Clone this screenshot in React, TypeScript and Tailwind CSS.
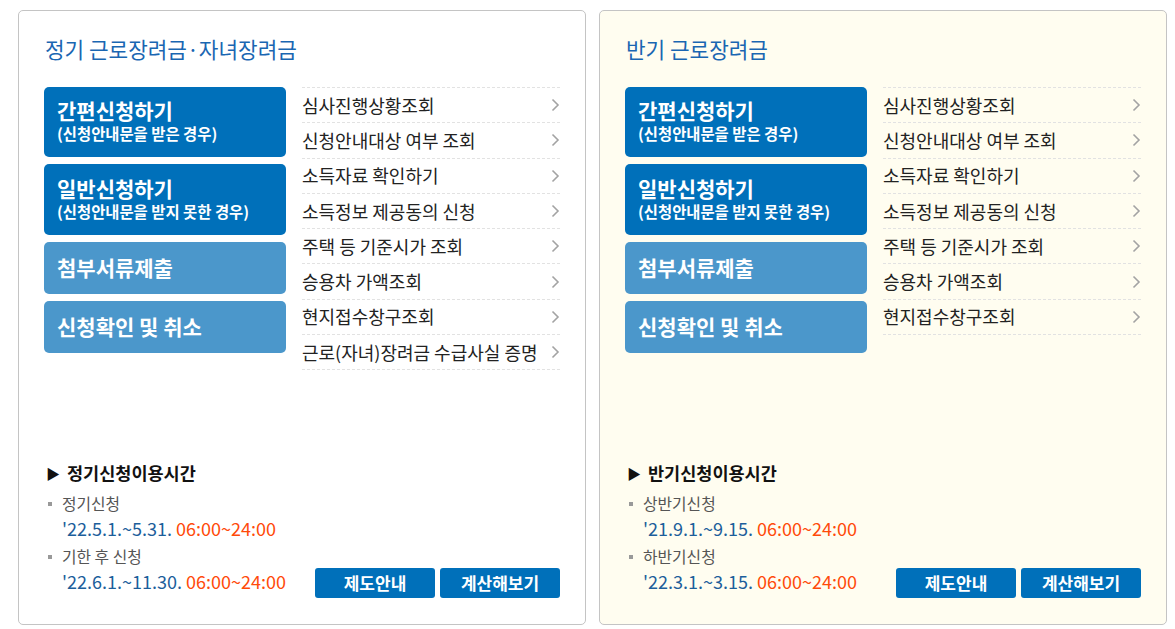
const FONT = "font-['Noto_Sans_CJK_KR','Noto_Sans',sans-serif]";

type Panel = {
  title: string;
  bg: string;
  links: string[];
  heading: string;
  periods: { label: string; date: string }[];
};

const panels: Panel[] = [
  {
    title: "정기 근로장려금·자녀장려금",
    bg: "bg-white",
    links: [
      "심사진행상황조회",
      "신청안내대상 여부 조회",
      "소득자료 확인하기",
      "소득정보 제공동의 신청",
      "주택 등 기준시가 조회",
      "승용차 가액조회",
      "현지접수창구조회",
      "근로(자녀)장려금 수급사실 증명",
    ],
    heading: "정기신청이용시간",
    periods: [
      { label: "정기신청", date: "'22.5.1.~5.31." },
      { label: "기한 후 신청", date: "'22.6.1.~11.30." },
    ],
  },
  {
    title: "반기 근로장려금",
    bg: "bg-[#fffdf0]",
    links: [
      "심사진행상황조회",
      "신청안내대상 여부 조회",
      "소득자료 확인하기",
      "소득정보 제공동의 신청",
      "주택 등 기준시가 조회",
      "승용차 가액조회",
      "현지접수창구조회",
    ],
    heading: "반기신청이용시간",
    periods: [
      { label: "상반기신청", date: "'21.9.1.~9.15." },
      { label: "하반기신청", date: "'22.3.1.~3.15." },
    ],
  },
];

function Chevron() {
  return (
    <svg width="9" height="14" viewBox="0 0 9 14" className="shrink-0">
      <polyline points="1.5,1.5 7,7 1.5,12.5" fill="none" stroke="#a3a3a3" strokeWidth="1.6" />
    </svg>
  );
}

function ApplyButtons() {
  return (
    <div className="flex flex-col gap-[7px] w-[242px] shrink-0 text-white font-bold">
      <a className="h-[70px] rounded-[5px] bg-[#0070ba] pl-[13px] pb-[3px] flex flex-col justify-center">
        <span className="text-[21px] leading-[26px]">간편신청하기</span>
        <span className="text-[15.4px] leading-[21px]">(신청안내문을 받은 경우)</span>
      </a>
      <a className="h-[71px] rounded-[5px] bg-[#0070ba] pl-[13px] pb-[3px] flex flex-col justify-center">
        <span className="text-[21px] leading-[26px]">일반신청하기</span>
        <span className="text-[15.4px] leading-[21px]">(신청안내문을 받지 못한 경우)</span>
      </a>
      <a className="h-[52px] rounded-[5px] bg-[#4b97cb] pl-[13px] flex items-center text-[21px]">
        첨부서류제출
      </a>
      <a className="h-[52px] rounded-[5px] bg-[#4b97cb] pl-[13px] flex items-center text-[21px]">
        신청확인 및 취소
      </a>
    </div>
  );
}

function PanelCard({ panel }: { panel: Panel }) {
  return (
    <section
      className={`w-[568px] h-[615px] border border-[#c4c4c4] rounded-[5px] ${panel.bg} px-[25px] pt-[23px] pb-[25px] flex flex-col`}
    >
      <h2 className="text-[21.3px] leading-[30px] text-[#1a66b2] pl-px">{panel.title}</h2>

      <div className="flex gap-[16px] mt-[23px]">
        <ApplyButtons />
        <ul className="flex-1 border-b border-dashed border-[#e2e2e2] self-start">
          {panel.links.map((link) => (
            <li
              key={link}
              className="h-[35.3px] border-t border-dashed border-[#e2e2e2] flex items-center justify-between text-[18px] text-[#222]"
            >
              <span>{link}</span>
              <Chevron />
            </li>
          ))}
        </ul>
      </div>

      <div className="mt-auto pl-[2px]">
        <h3 className="flex items-center gap-[7px] text-[17.5px] font-bold text-[#111] leading-[24px]">
          <span className="text-[14px]">▶</span>
          {panel.heading}
        </h3>
        <div className="flex items-end justify-between mt-[6px]">
          <ul className="flex flex-col gap-[3px] mb-[5px]">
            {panel.periods.map((p) => (
              <li key={p.label}>
                <div className="flex items-center text-[15.8px] text-[#555] leading-[25px]">
                  <span className="w-[4px] h-[4px] bg-[#999] ml-[2px] mr-[10px]" />
                  {p.label}
                </div>
                <div className="pl-[16px] text-[18px] leading-[25px] text-[#1c5e9b]">
                  {p.date} <span className="text-[#ff4a0a]">06:00~24:00</span>
                </div>
              </li>
            ))}
          </ul>
          <div className="flex gap-[5px] mb-[1px] text-white font-bold text-[17px]">
            <a className="w-[120px] h-[30px] rounded-[3px] bg-[#0070ba] flex items-center justify-center">제도안내</a>
            <a className="w-[120px] h-[30px] rounded-[3px] bg-[#0070ba] flex items-center justify-center">계산해보기</a>
          </div>
        </div>
      </div>
    </section>
  );
}

export default function App() {
  return (
    <div className={`${FONT} bg-white w-[1175px] h-[629px] pt-[10px] pl-[18px] flex gap-[13px]`}>
      {panels.map((p) => (
        <PanelCard key={p.title} panel={p} />
      ))}
    </div>
  );
}
